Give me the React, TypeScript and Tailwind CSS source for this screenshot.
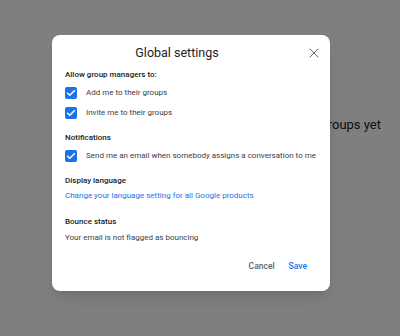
import { X } from "lucide-react";

const Checkbox = () => (
  <span className="flex h-[12px] w-[12px] shrink-0 items-center justify-center rounded-[2px] bg-[#1a73e8]">
    <svg width="10" height="10" viewBox="0 0 24 24" fill="none" stroke="white" strokeWidth="3.5" strokeLinecap="square">
      <path d="M4 12.5l5 5L20 6.5" />
    </svg>
  </span>
);

const Row = ({ label, className }: { label: string; className: string }) => (
  <div className={`flex h-[16px] items-center gap-[9px] ${className}`}>
    <Checkbox />
    <span className="whitespace-nowrap text-[8px] text-[#3c4043]">{label}</span>
  </div>
);

const App = () => {
  return (
    <div className="relative h-[336px] w-[400px] overflow-hidden bg-white font-['Roboto',sans-serif]">
      <div className="flex justify-end pr-[19px] pt-[117px] text-[13px] leading-[16px] text-[#202124]">
        You are not a member of any groups yet
      </div>

      <div className="absolute inset-0 bg-black/50" />

      <div className="absolute left-[52px] top-[35px] h-[256px] w-[278px] rounded-[8px] bg-white px-[13px] shadow-lg">
        <div className="relative mt-[9px] h-[18px] pr-[28px] text-center text-[12.5px] leading-[18px] text-[#202124]">
          Global settings
          <button className="absolute right-[-5px] top-[1px] text-[#5f6368]">
            <X size={16} strokeWidth={1.5} />
          </button>
        </div>

        <div className="mt-[5px] h-[16px] text-[8px] font-medium leading-[16px] text-[#202124]">Allow group managers to:</div>
        <Row label="Add me to their groups" className="mt-[2px]" />
        <Row label="Invite me to their groups" className="mt-[4px]" />

        <div className="mt-[9px] h-[16px] text-[8px] font-medium leading-[16px] text-[#202124]">Notifications</div>
        <Row label="Send me an email when somebody assigns a conversation to me" className="mt-[2px]" />

        <div className="mt-[9px] h-[16px] text-[8px] font-medium leading-[16px] text-[#202124]">Display language</div>
        <div className="h-[14px] text-[8px] leading-[14px] text-[#1a73e8]">Change your language setting for all Google products</div>

        <div className="mt-[11px] h-[16px] text-[8px] font-medium leading-[16px] text-[#202124]">Bounce status</div>
        <div className="h-[16px] text-[8px] leading-[16px] text-[#3c4043]">Your email is not flagged as bouncing</div>

        <div className="mt-[12px] flex justify-end gap-[14px] pr-[10px] text-[8.5px] font-medium leading-[16px]">
          <button className="text-[#5f6368]">Cancel</button>
          <button className="text-[#1a73e8]">Save</button>
        </div>
      </div>
    </div>
  );
};

export default App;
